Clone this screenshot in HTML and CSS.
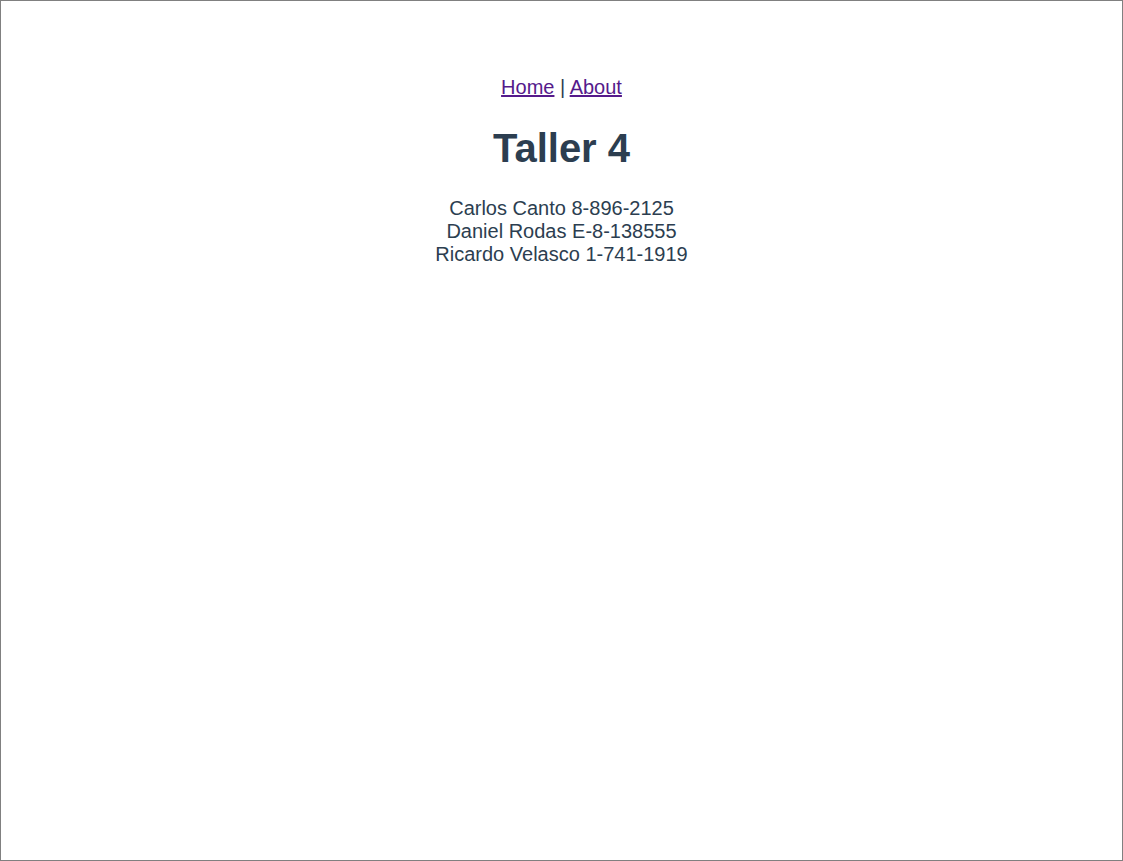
FILE: index.html
```html
<!DOCTYPE html>
<html>
<head>
<meta charset="utf-8">
<link rel="stylesheet" href="styles.css">
</head>
<body>
<div class="frame">
  <div class="app">
    <nav class="nav"><a class="link" href="#">Home</a> | <a class="link" href="#">About</a></nav>
    <h1 class="title">Taller 4</h1>
    <p class="members">Carlos Canto 8-896-2125<br>Daniel Rodas E-8-138555<br>Ricardo Velasco 1-741-1919</p>
  </div>
</div>
</body>
</html>
```
FILE: styles.css
```css
html, body { margin: 0; padding: 0; background: #fff; }
.frame {
  box-sizing: border-box;
  width: 1123px;
  height: 861px;
  border: 1px solid #808080;
  overflow: hidden;
}
.app {
  font-family: "Liberation Sans", Arial, sans-serif;
  font-size: 20px;
  line-height: 23px;
  text-align: center;
  color: #2c3e50;
  padding-top: 75px;
}
.nav { color: #2c3e50; }
.link { color: #551a8b; text-decoration: underline; }
.title {
  font-size: 40px;
  font-weight: bold;
  line-height: 46px;
  margin: 26px 0 0;
}
.members { margin: 26px 0 0; }
```
